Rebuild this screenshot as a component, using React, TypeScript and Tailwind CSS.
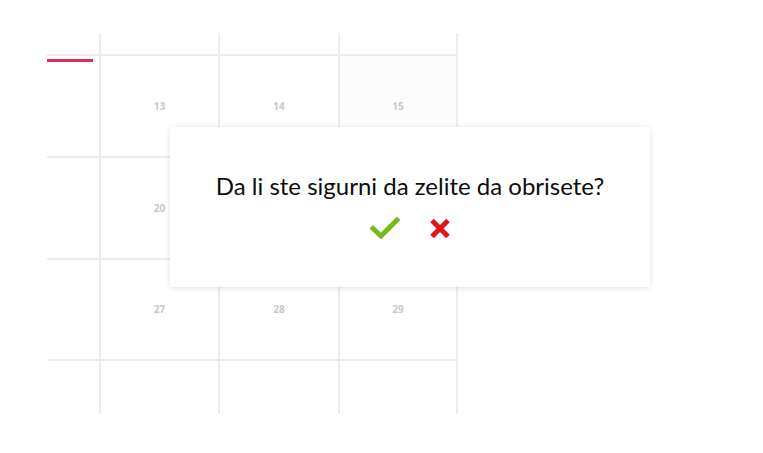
import { Fragment } from 'react';

const weeks: (string | null)[][] = [
    ['13', '14', '15'],
    ['20', '', ''],
    ['27', '28', '29'],
    [null, null, null],
];

const rowHeights = ['h-[102px]', 'h-[102px]', 'h-[101px]', 'h-[53px]'];

function CheckIcon() {
    return (
        <svg width="30" height="22" viewBox="0 0 30 22" fill="none">
            <path d="M3 11.5 L11 19 L27 3" stroke="#78b81c" strokeWidth="5" strokeLinecap="square" strokeLinejoin="miter" />
        </svg>
    );
}

function CrossIcon() {
    return (
        <svg width="22" height="21" viewBox="0 0 22 21" fill="none">
            <path d="M3 2.5 L19 18.5 M19 2.5 L3 18.5" stroke="#e2141c" strokeWidth="5" strokeLinecap="butt" />
        </svg>
    );
}

export default function App() {
    return (
        <div className="relative w-[763px] h-[453px] bg-white overflow-hidden font-['Lato','Open_Sans',sans-serif]">
            <div className="pt-[33px] pl-[47px]">
                {/* header strip */}
                <div className="flex h-[23px] w-[411px] border-b-2 border-[#ececec]">
                    <div className="w-[52px]" />
                    <div className="w-[119px] border-l-2 border-[#ececec]" />
                    <div className="w-[120px] border-l-2 border-[#ececec]" />
                    <div className="w-[120px] border-x-2 border-[#ececec]" />
                </div>
                {weeks.map((week, i) => (
                    <div
                        key={i}
                        className={`flex w-[411px] ${rowHeights[i]} ${i < 3 ? 'border-b-2 border-[#ececec]' : ''}`}
                    >
                        <div className="relative w-[52px]">
                            {i === 0 && <div className="absolute left-0 top-[3px] h-[3px] w-[46px] bg-[#e0285a]" />}
                        </div>
                        {week.map((day, j) => (
                            <Fragment key={j}>
                                <div
                                    className={`flex items-center justify-center border-l-2 border-[#ececec] text-[10px] font-bold text-[#c9c9c9] font-['Open_Sans',sans-serif] ${
                                        j === 0 ? 'w-[119px]' : 'w-[120px]'
                                    } ${j === 2 ? 'border-r-2' : ''} ${i === 0 && j === 2 ? 'bg-[#fcfcfc]' : ''}`}
                                >
                                    {day}
                                </div>
                            </Fragment>
                        ))}
                    </div>
                ))}
            </div>

            {/* confirm dialog */}
            <div className="absolute left-[170px] top-[127px] w-[480px] h-[160px] bg-white shadow-[0_1px_6px_rgba(0,0,0,0.12)] flex flex-col items-center pt-[44px]">
                <p className="text-[24px] leading-[30px] text-[#0d0d0d]">Da li ste sigurni da zelite da obrisete?</p>
                <div className="mt-[16px] flex items-center gap-[29px]">
                    <button className="flex items-center">
                        <CheckIcon />
                    </button>
                    <button className="flex items-center">
                        <CrossIcon />
                    </button>
                </div>
            </div>
        </div>
    );
}
